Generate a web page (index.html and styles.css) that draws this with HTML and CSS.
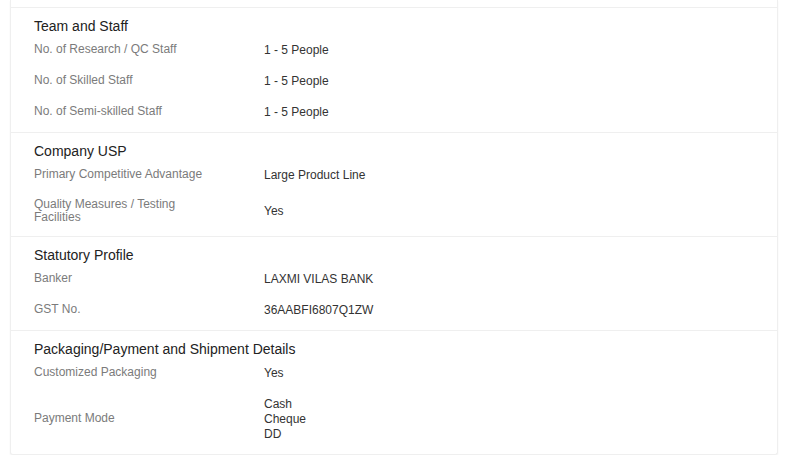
FILE: index.html
```html
<!DOCTYPE html>
<html>
<head>
<meta charset="utf-8">
<link rel="stylesheet" href="styles.css">
</head>
<body>
<div class="card">
  <div class="tail"></div>
  <section class="sec">
    <h3 class="title">Team and Staff</h3>
    <div class="rows">
      <div class="lbl">No. of Research / QC Staff</div><div class="val">1 - 5 People</div>
      <div class="lbl">No. of Skilled Staff</div><div class="val">1 - 5 People</div>
      <div class="lbl">No. of Semi-skilled Staff</div><div class="val">1 - 5 People</div>
    </div>
  </section>
  <section class="sec">
    <h3 class="title">Company USP</h3>
    <div class="rows">
      <div class="lbl">Primary Competitive Advantage</div><div class="val">Large Product Line</div>
      <div class="lbl">Quality Measures / Testing Facilities</div><div class="val">Yes</div>
    </div>
  </section>
  <section class="sec">
    <h3 class="title">Statutory Profile</h3>
    <div class="rows">
      <div class="lbl">Banker</div><div class="val">LAXMI VILAS BANK</div>
      <div class="lbl">GST No.</div><div class="val">36AABFI6807Q1ZW</div>
    </div>
  </section>
  <section class="sec last">
    <h3 class="title">Packaging/Payment and Shipment Details</h3>
    <div class="rows">
      <div class="lbl">Customized Packaging</div><div class="val">Yes</div>
      <div class="lbl">Payment Mode</div><div class="val">Cash<br>Cheque<br>DD</div>
    </div>
  </section>
</div>
</body>
</html>
```
FILE: styles.css
```css
html, body {
  margin: 0;
  padding: 0;
  background: #ffffff;
}
body {
  padding: 0 10px 0 10px;
  font-family: "Liberation Sans", Arial, sans-serif;
}
.card {
  width: 766px;
  border: 1px solid #efefef;
  border-top: none;
  border-radius: 0 0 3px 3px;
  box-shadow: 0 1px 2px rgba(0, 0, 0, 0.05);
  background: #fff;
}
.tail {
  height: 7px;
  border-bottom: 1px solid #efefef;
}
.sec {
  padding: 9px 23px 4px 23px;
  border-bottom: 1px solid #efefef;
}
.sec.last {
  border-bottom: none;
}
.title {
  margin: 0;
  font-size: 14px;
  line-height: 18px;
  font-weight: normal;
  color: #222;
}
.rows {
  display: grid;
  grid-template-columns: 230px 1fr;
  align-items: center;
}
.lbl {
  font-size: 12px;
  line-height: 13px;
  color: #7b7b7b;
  padding: 6.5px 60px 8.5px 0;
}
.val {
  font-size: 12px;
  line-height: 15px;
  color: #333;
  padding: 8px 0;
}
```
